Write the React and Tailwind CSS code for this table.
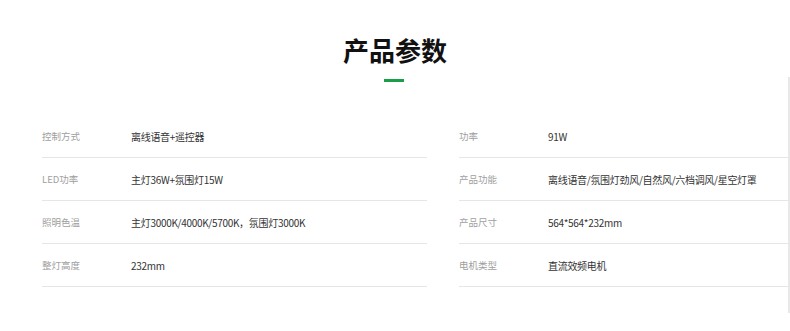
const left = [
  ['控制方式', '离线语音+遥控器'],
  ['LED功率', '主灯36W+氛围灯15W'],
  ['照明色温', '主灯3000K/4000K/5700K，氛围灯3000K'],
  ['整灯高度', '232mm'],
]

const right = [
  ['功率', '91W'],
  ['产品功能', '离线语音/氛围灯劲风/自然风/六档调风/星空灯罩'],
  ['产品尺寸', '564*564*232mm'],
  ['电机类型', '直流效频电机'],
]

function SpecTable({ rows, className }) {
  return (
    <div className={`flex flex-col ${className}`}>
      {rows.map(([label, value]) => (
        <div key={label} className="flex h-[43px] shrink-0 items-center border-b border-[#e6e6e6]">
          <div className="w-[89px] shrink-0 text-[9.5px] text-[#a0a0a0]">{label}</div>
          <div className="text-[10px] tracking-[-0.3px] text-[#333333] whitespace-nowrap">{value}</div>
        </div>
      ))}
    </div>
  )
}

export default function App() {
  return (
    <div
      className="w-[790px] h-[331px] overflow-hidden bg-white flex flex-col"
      style={{ fontFamily: '"Noto Sans CJK SC", "Noto Sans", sans-serif' }}
    >
      <h1 className="pt-[34px] h-[77px] text-center text-[26px] leading-[32px] font-bold text-[#111111]">
        产品参数
      </h1>

      <div className="h-[236px] w-[790px] border-r-2 border-[#e8e8e8] flex flex-col">
        <div className="mx-auto mt-[2px] h-[3px] w-[20px] bg-[#1a9f48]" />
        <div className="mt-[33px] flex gap-[32px] pl-[42px]">
          <SpecTable rows={left} className="w-[385px] shrink-0" />
          <SpecTable rows={right} className="w-[330px] shrink-0" />
        </div>
      </div>
    </div>
  )
}
